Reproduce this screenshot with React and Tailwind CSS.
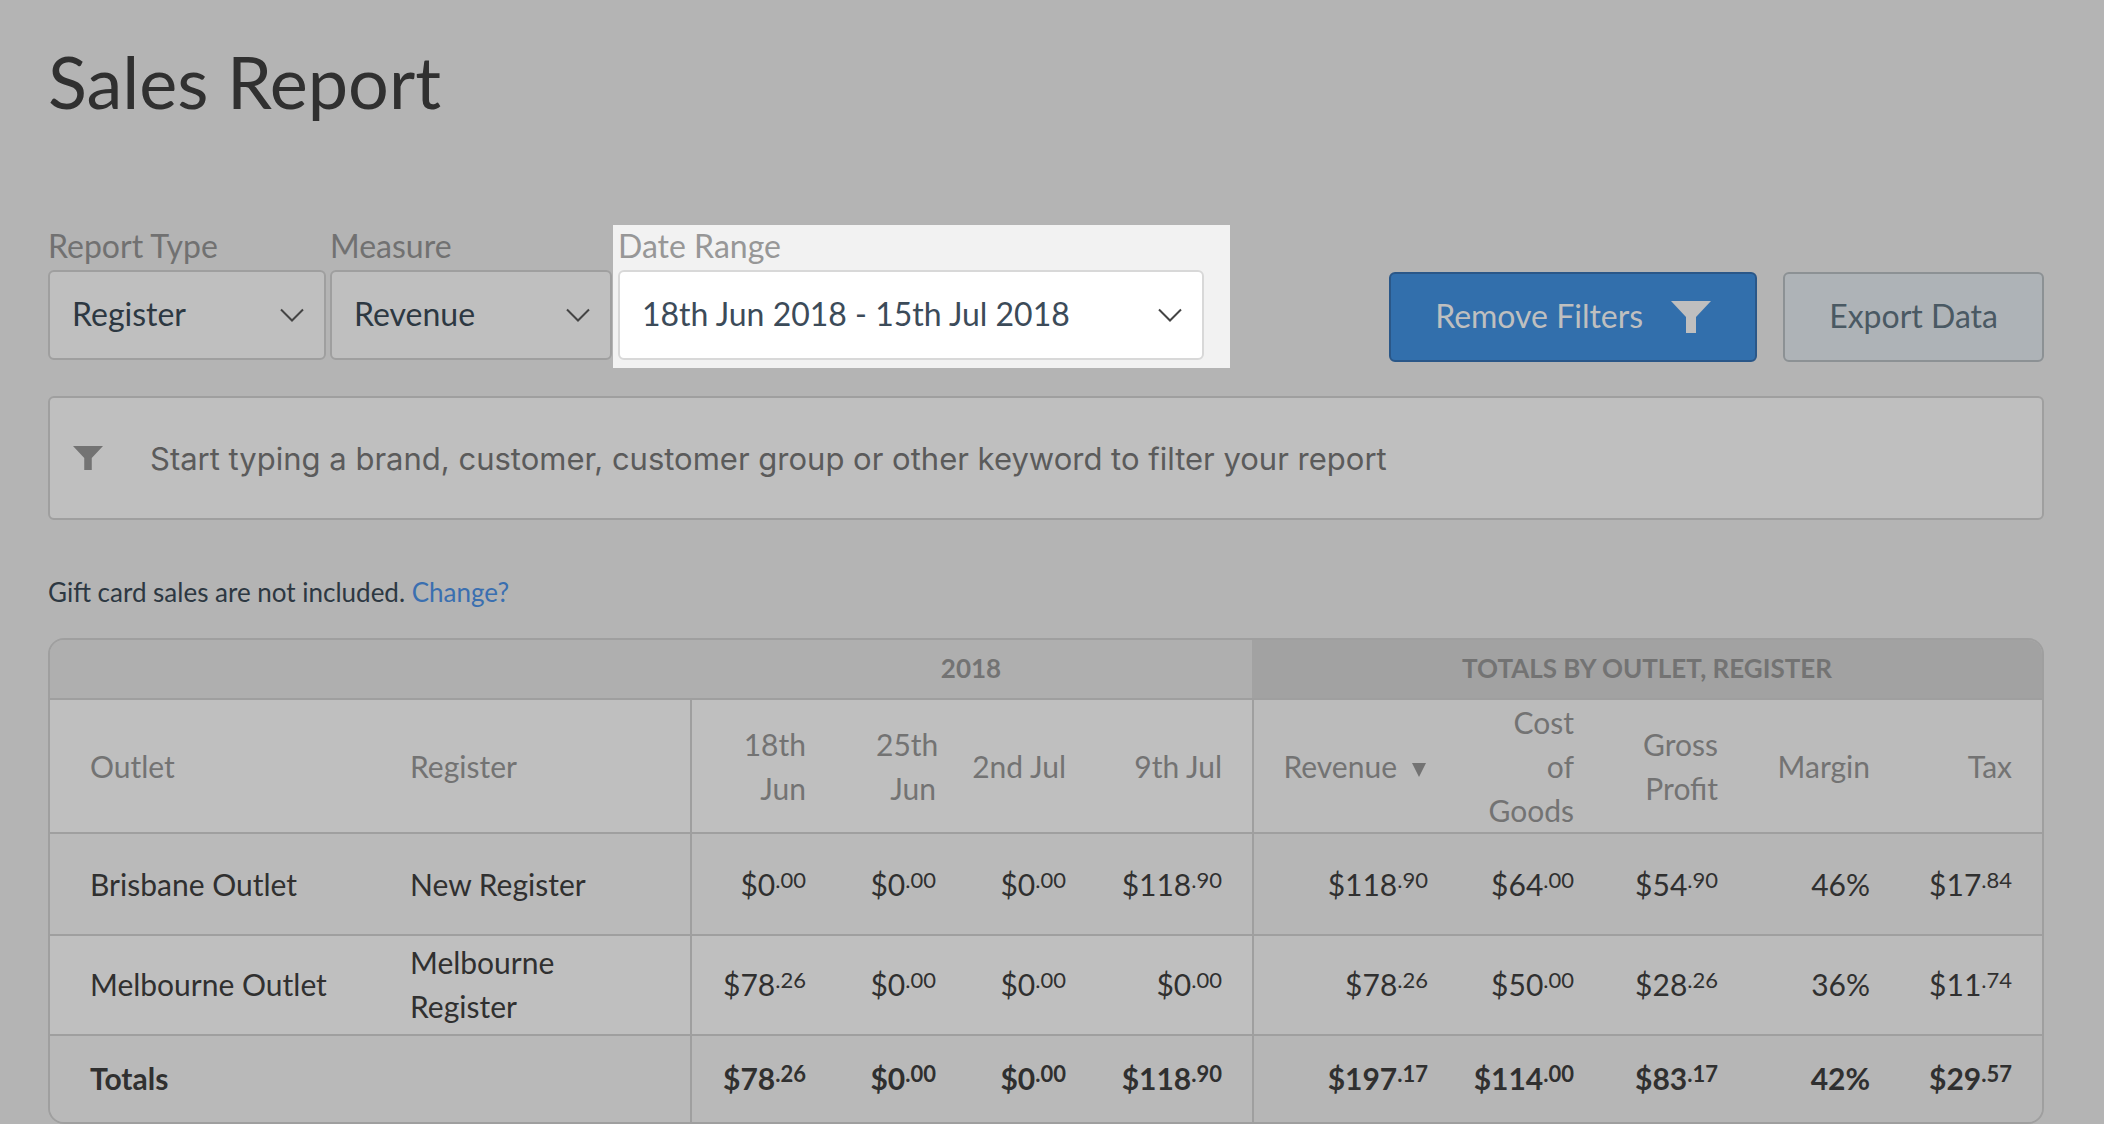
import React from "react";

const years = "2018";
const periods = ["18th Jun", "25th Jun", "2nd Jul", "9th Jul"];

const rows = [
  {
    outlet: "Brisbane Outlet",
    register: "New Register",
    weekly: ["$0.00", "$0.00", "$0.00", "$118.90"],
    totals: ["$118.90", "$64.00", "$54.90", "46%", "$17.84"],
    height: "h-[102px]",
    left: "bg-[#bababa]",
    right: "bg-[#b6b6b6]",
  },
  {
    outlet: "Melbourne Outlet",
    register: "Melbourne Register",
    weekly: ["$78.26", "$0.00", "$0.00", "$0.00"],
    totals: ["$78.26", "$50.00", "$28.26", "36%", "$11.74"],
    height: "h-[100px] [&>*]:pb-0.5",
    left: "bg-[#bfbfbf]",
    right: "bg-[#bbbbbb]",
  },
];

const summary = {
  weekly: ["$78.26", "$0.00", "$0.00", "$118.90"],
  totals: ["$197.17", "$114.00", "$83.17", "42%", "$29.57"],
};

function Chevron() {
  return (
    <svg
      className="pointer-events-none absolute right-[22px] top-1/2 h-4 w-6 -translate-y-1/2"
      viewBox="0 0 24 16"
      fill="none"
      stroke="#444444"
      strokeWidth="2"
      aria-hidden="true"
    >
      <path d="M1 2.5 L12 13.5 L23 2.5" />
    </svg>
  );
}

function Funnel({ className }) {
  return (
    <svg className={className} viewBox="0 0 40 32" fill="currentColor" aria-hidden="true">
      <path d="M0 0 H40 L25 16 V32 H15 V16 Z" />
    </svg>
  );
}

function Field({ id, label, value, className, labelClass, selectClass }) {
  return (
    <div className={`flex flex-col pb-2 ${className}`}>
      <label htmlFor={id} className={`mb-[3px] text-[32px] leading-[42px] ${labelClass}`}>
        {label}
      </label>
      <div className="relative">
        <select
          id={id}
          defaultValue={value}
          className={`h-[90px] w-full appearance-none rounded-md border-2 pr-14 pb-0.5 pl-[22px] text-[32px] ${selectClass}`}
        >
          <option>{value}</option>
        </select>
        <Chevron />
      </div>
    </div>
  );
}

function Amount({ value }) {
  const [whole, cents] = value.split(".");
  return (
    <>
      {whole}
      {cents && <span className="relative -top-2 text-[22px] leading-none">.{cents}</span>}
    </>
  );
}

function AmountCells({ weekly, totals, left = "", right = "", edge = "border-b-2" }) {
  return (
    <>
      {weekly.map((v, i) => (
        <td
          key={`w${i}`}
          className={`border-[#9f9f9f] pr-[30px] text-right ${edge} ${left} ${i === 0 ? "border-l-2" : ""}`}
        >
          <Amount value={v} />
        </td>
      ))}
      {totals.map((v, i) => (
        <td
          key={`t${i}`}
          className={`border-[#9f9f9f] pr-[30px] text-right ${edge} ${right} ${i === 0 ? "border-l-2" : ""}`}
        >
          <Amount value={v} />
        </td>
      ))}
    </>
  );
}

function SalesTable() {
  const head = "border-b-2 border-[#9f9f9f] font-normal";
  return (
    <div className="overflow-hidden rounded-2xl border-2 border-[#9f9f9f]">
      <table className="w-full table-fixed border-separate border-spacing-0 text-[30px] leading-[44px] text-[#303030]">
        <colgroup>
          <col className="w-[320px]" />
          <col className="w-[320px]" />
          <col className="w-[146px]" />
          <col className="w-[130px]" />
          <col className="w-[130px]" />
          <col className="w-[156px]" />
          <col className="w-[206px]" />
          <col className="w-[146px]" />
          <col className="w-[144px]" />
          <col className="w-[152px]" />
          <col className="w-[142px]" />
        </colgroup>
        <thead className="text-[#737373]">
          <tr className="h-[60px] text-[26px] leading-8 [&>*]:pb-0.5">
            <td colSpan={2} className="border-b-2 border-[#9f9f9f] bg-[#afafaf]" />
            <th colSpan={4} className="border-b-2 border-[#9f9f9f] bg-[#afafaf] font-bold">
              {years}
            </th>
            <th colSpan={5} className="border-b-2 border-[#9f9f9f] bg-[#a2a2a2] font-bold">
              TOTALS BY OUTLET, REGISTER
            </th>
          </tr>
          <tr className="h-[134px]">
            <th className={`${head} bg-[#bfbfbf] pl-10 text-left`}>Outlet</th>
            <th className={`${head} bg-[#bfbfbf] pl-10 text-left`}>Register</th>
            {periods.map((p, i) => (
              <th
                key={p}
                className={`${head} bg-[#bfbfbf] pr-[30px] text-right ${i === 0 ? "border-l-2 pl-10" : i === 1 ? "pl-10" : ""}`}
              >
                {p}
              </th>
            ))}
            <th className={`${head} border-l-2 bg-[#bbbbbb] pr-8 text-right`}>
              <button type="button" className="inline-flex items-center gap-[15px]">
                Revenue
                <svg className="mt-2 h-[14px] w-[14px]" viewBox="0 0 14 14" fill="currentColor" aria-hidden="true">
                  <path d="M0 0 H14 L7 14 Z" />
                </svg>
              </button>
            </th>
            <th className={`${head} bg-[#bbbbbb] pr-[30px] pl-7 text-right`}>Cost of Goods</th>
            <th className={`${head} bg-[#bbbbbb] pr-[30px] text-right`}>Gross Profit</th>
            <th className={`${head} bg-[#bbbbbb] pr-[30px] text-right`}>Margin</th>
            <th className={`${head} bg-[#bbbbbb] pr-[30px] text-right`}>Tax</th>
          </tr>
        </thead>
        <tbody>
          {rows.map((r) => (
            <tr key={r.outlet} className={r.height}>
              <td className={`border-b-2 border-[#9f9f9f] pl-10 ${r.left}`}>{r.outlet}</td>
              <td className={`border-b-2 border-[#9f9f9f] pr-20 pl-10 ${r.left}`}>{r.register}</td>
              <AmountCells weekly={r.weekly} totals={r.totals} left={r.left} right={r.right} />
            </tr>
          ))}
        </tbody>
        <tfoot>
          <tr className="h-[86px] font-bold [&>*]:pb-0.5">
            <th scope="row" className="bg-[#b9b9b9] pl-10 text-left">
              Totals
            </th>
            <td className="bg-[#b9b9b9]" />
            <AmountCells
              weekly={summary.weekly}
              totals={summary.totals}
              left="bg-[#b9b9b9]"
              right="bg-[#b6b6b6]"
              edge=""
            />
          </tr>
        </tfoot>
      </table>
    </div>
  );
}

export default function App() {
  return (
    <main className="min-h-screen bg-[#b4b4b4] pt-[37px] pr-[60px] pl-12 font-[Lato,sans-serif] text-[#303030]">
      <h1 className="text-[72px] leading-[88px]">Sales Report</h1>

      <div className="mt-[100px] flex items-start">
        <Field
          id="report-type"
          label="Report Type"
          value="Register"
          className="mr-1 w-[278px]"
          labelClass="text-[#717171]"
          selectClass="border-[#9f9f9f] bg-[#bfbfbf] text-[#2d3842]"
        />
        <Field
          id="measure"
          label="Measure"
          value="Revenue"
          className="w-[282px]"
          labelClass="text-[#717171]"
          selectClass="border-[#9f9f9f] bg-[#bfbfbf] text-[#2d3842]"
        />
        <Field
          id="date-range"
          label="Date Range"
          value="18th Jun 2018 - 15th Jul 2018"
          className="ml-px w-[617px] bg-[#f2f2f2] pr-[26px] pl-[5px]"
          labelClass="text-[#979797]"
          selectClass="border-[#d8d8d8] bg-white text-[#3c4b59]"
        />
        <div className="mt-[47px] ml-auto flex gap-[26px]">
          <button
            type="button"
            className="flex h-[90px] items-center gap-7 rounded-md border-2 border-[#2a5788] bg-[#326fac] px-11 text-[32px] text-[#bfbfbf]"
          >
            <span className="pb-0.5">Remove Filters</span>
            <Funnel className="h-8 w-10" />
          </button>
          <button
            type="button"
            className="h-[90px] rounded-md border-2 border-[#8c9194] bg-[#aeb3b7] px-11 pb-0.5 text-[32px] text-[#4a5963]"
          >
            Export Data
          </button>
        </div>
      </div>

      <div className="mt-7 flex h-[124px] items-center rounded-md border-2 border-[#9f9f9f] bg-[#bfbfbf] pl-[23px] text-[#737373]">
        <Funnel className="h-6 w-[30px] shrink-0" />
        <input
          type="text"
          aria-label="Filter report"
          placeholder="Start typing a brand, customer, customer group or other keyword to filter your report"
          className="h-full min-w-0 flex-1 bg-transparent pl-[47px] font-[Inter,sans-serif] text-[31px] text-[#303030] outline-none placeholder:text-[#5b5b5b]"
        />
      </div>

      <p className="mt-14 mb-[30px] text-[26px] leading-8 text-[#2d3842]">
        Gift card sales are not included.{" "}
        <a href="#change" className="text-[#3a6fb0]">
          Change?
        </a>
      </p>

      <SalesTable />
    </main>
  );
}
